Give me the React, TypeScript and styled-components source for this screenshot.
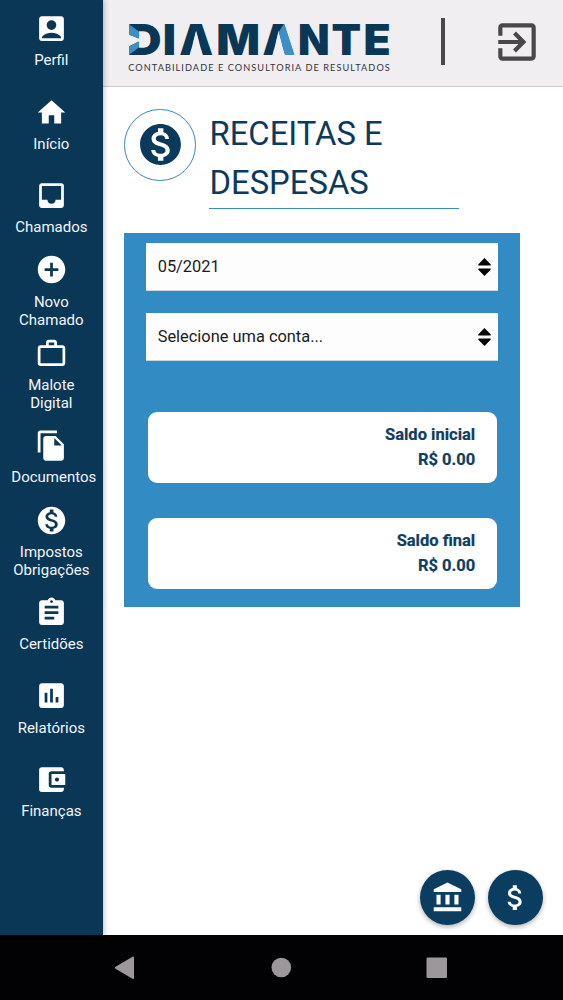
import React from 'react';
import styled, { createGlobalStyle } from 'styled-components';
import type { IconType } from 'react-icons';
import {
  MdAccountBalance,
  MdAccountBalanceWallet,
  MdAccountBox,
  MdAddCircle,
  MdAssessment,
  MdAssignment,
  MdAttachMoney,
  MdExitToApp,
  MdFileCopy,
  MdHome,
  MdInbox,
  MdMonetizationOn,
  MdWorkOutline,
} from 'react-icons/md';

const navy = '#0b3757';
const blue = '#338bc3';
const lightBlue = '#3d8fc8';
const headerGray = '#f0eef1';

const GlobalStyle = createGlobalStyle`
  *, *::before, *::after { box-sizing: border-box; }
  body {
    margin: 0;
    background: #fff;
    font-family: Roboto, 'Liberation Sans', sans-serif;
  }
`;

const Screen = styled.div`
  display: flex;
  flex-direction: column;
  width: 563px;
  height: 1000px;
  overflow: hidden;
`;

const Body = styled.div`
  display: flex;
  height: 934.5px;
`;

const Sidebar = styled.nav`
  position: relative;
  z-index: 1;
  flex: none;
  width: 102.7px;
  background: ${navy};
  box-shadow: 1px 0 5px rgba(0, 0, 0, 0.28);
`;

const NavItem = styled.a`
  display: flex;
  flex-direction: column;
  align-items: center;
  justify-content: center;
  gap: 6.2px;
  height: 83.4px;
  color: #fff;
  svg { flex: none; }
  &:first-child { margin-top: -0.9px; }
`;

const NavLabel = styled.span`
  width: 80px;
  font-size: 15px;
  line-height: 18px;
  text-align: center;
  white-space: pre-line;
  color: #f2f6f9;
`;

const Main = styled.div`
  flex: 1;
  display: flex;
  flex-direction: column;
`;

const Header = styled.header`
  display: flex;
  align-items: center;
  height: 87px;
  padding: 0 21px 2px 21px;
  background: ${headerGray};
  border-bottom: 1px solid #cbcbcd;
`;

const Divider = styled.div`
  width: 4.3px;
  height: 46.5px;
  margin: -1px 46.7px 0 47.3px;
  background: #48474a;
`;

const Content = styled.main`
  flex: 1;
  display: flex;
  flex-direction: column;
  padding: 22px 43px 10px 21.8px;
`;

const TitleRow = styled.div`
  display: flex;
  align-items: flex-start;
  gap: 13.5px;
  height: 123.5px;
`;

const TitleBadge = styled.div`
  display: grid;
  place-items: center;
  width: 71.5px;
  height: 71.5px;
  border: 1.4px solid ${blue};
  border-radius: 50%;
  color: #0b3a5c;
`;

const Title = styled.h1`
  width: 250px;
  height: 100px;
  margin: 0;
  padding-top: 0.6px;
  border-bottom: 1.5px solid ${blue};
  color: #0b3a5c;
  font-size: 32.8px;
  font-weight: 400;
  line-height: 49.5px;
`;

const Panel = styled.section`
  display: flex;
  flex-direction: column;
  height: 374.5px;
  padding: 10.5px 22px 0;
  background: ${blue};
`;

const SelectBox = styled.div`
  flex: none;
  display: flex;
  align-items: center;
  justify-content: space-between;
  height: 48px;
  margin-bottom: 22px;
  padding: 0 7px 0 11.2px;
  background: #fdfdfe;
  border-bottom: 1px solid #c9d5df;
  color: #1b1b1d;
  font-size: 16.4px;
`;

const Balance = styled.div`
  flex: none;
  height: 71.3px;
  margin: 28.6px 1.3px 6.6px;
  padding: 11.4px 21.5px 0;
  border-radius: 9px;
  background: #fff;
  color: #0f3e5f;
  font-size: 16.5px;
  font-weight: 700;
  line-height: 24.6px;
  text-align: right;
  -webkit-text-stroke: 0.2px #0f3e5f;
`;

const Actions = styled.div`
  display: flex;
  gap: 13.5px;
  margin: auto -23.2px 0 auto;
`;

const RoundButton = styled.button`
  display: grid;
  place-items: center;
  width: 55px;
  height: 55px;
  padding: 0;
  border: 0;
  border-radius: 50%;
  background: #0b3d60;
  color: #fff;
  box-shadow: 0 2px 5px rgba(0, 0, 0, 0.3);
`;

const SystemBar = styled.footer`
  flex: 1;
  background: #020103;
  svg { display: block; }
`;

const wordmark: [string, number, number][] = [
  ['D', 3, 34.6],
  ['I', 38.7, 13.3],
  ['A', 55.3, 33.9],
  ['M', 92.3, 43.8],
  ['A', 138.5, 32.5],
  ['N', 174, 31.6],
  ['T', 207.4, 29.6],
  ['E', 239.6, 27.2],
];

function Logo() {
  return (
    <svg width="270" height="66" viewBox="0 0 270 66">
      <g fontFamily="Inter, Lato, sans-serif" fontWeight="900" fontSize="43" fill={navy}>
        {wordmark.map(([ch, x, w], i) => (
          <text key={i} x={x} y="46" textLength={w} lengthAdjust="spacingAndGlyphs">{ch}</text>
        ))}
      </g>
      {/* open counters of both As */}
      <path d="M65.7 46.6 72.1 22 78.7 46.6ZM148.5 46.6 154.7 22 161 46.6Z" fill={headerGray} />
      {/* light facets */}
      <path d="M160 14.7 170.4 46.1H161L154.7 23Z" fill={lightBlue} />
      <path d="M4.6 25.400 15 29.400V32.500L4.600 37.500Z" fill={headerGray} />
      <path d="M5 15.300 14.800 22.500V29.500L5 25.500ZM5 37.500 14.800 32.500V38.500L5 45.700Z" fill={lightBlue} />
      <text x="4.300" y="61.600" fontFamily="Lato, sans-serif" fontSize="9.200" fill="#33343c" textLength="261.500" lengthAdjust="spacing">
        CONTABILIDADE E CONSULTORIA DE RESULTADOS
      </text>
    </svg>
  );
}

const SortArrows = () => (
  <svg width="13" height="18" viewBox="0 0 13 18" fill="#050505">
    <path d="M6.5 0 12.6 6.2q.6 1.4-.6 1.4H1Q-.2 7.6 .4 6.2Z" />
    <path d="M6.5 18 12.6 11.8q.6-1.4-.6-1.4H1Q-.2 10.4 .4 11.8Z" />
  </svg>
);

const items: [IconType, string][] = [
  [MdAccountBox, 'Perfil'],
  [MdHome, 'Início'],
  [MdInbox, 'Chamados'],
  [MdAddCircle, 'Novo\nChamado'],
  [MdWorkOutline, 'Malote\nDigital'],
  [MdFileCopy, 'Documentos'],
  [MdMonetizationOn, 'Impostos\nObrigações'],
  [MdAssignment, 'Certidões'],
  [MdAssessment, 'Relatórios'],
  [MdAccountBalanceWallet, 'Finanças'],
];

export default function App() {
  return (
    <Screen>
      <GlobalStyle />
      <Body>
        <Sidebar>
          {items.map(([Icon, label]) => (
            <NavItem key={label}>
              <Icon size={33} />
              <NavLabel>{label}</NavLabel>
            </NavItem>
          ))}
        </Sidebar>
        <Main>
          <Header>
            <Logo />
            <Divider />
            <MdExitToApp size={50} color="#48474a" />
          </Header>
          <Content>
            <TitleRow>
              <TitleBadge><MdMonetizationOn size={49} /></TitleBadge>
              <Title>RECEITAS E<br />DESPESAS</Title>
            </TitleRow>
            <Panel>
              <SelectBox>05/2021<SortArrows /></SelectBox>
              <SelectBox>Selecione uma conta...<SortArrows /></SelectBox>
              <Balance>Saldo inicial<br />R$ 0.00</Balance>
              <Balance>Saldo final<br />R$ 0.00</Balance>
            </Panel>
            <Actions>
              <RoundButton><MdAccountBalance size={33} /></RoundButton>
              <RoundButton><MdAttachMoney size={33} /></RoundButton>
            </Actions>
          </Content>
        </Main>
      </Body>
      <SystemBar>
        <svg width="563" height="65" viewBox="0 0 563 65" fill="#9b979b">
          <path d="M115.5 31.7Q114 32.7 115.5 33.7L132.5 43.7Q134 44.5 134 43V22.5Q134 21 132.5 21.8Z" />
          <circle cx="281.3" cy="32.5" r="9.8" />
          <rect x="426.5" y="22.5" width="20.5" height="20.5" rx="1.2" />
        </svg>
      </SystemBar>
    </Screen>
  );
}
